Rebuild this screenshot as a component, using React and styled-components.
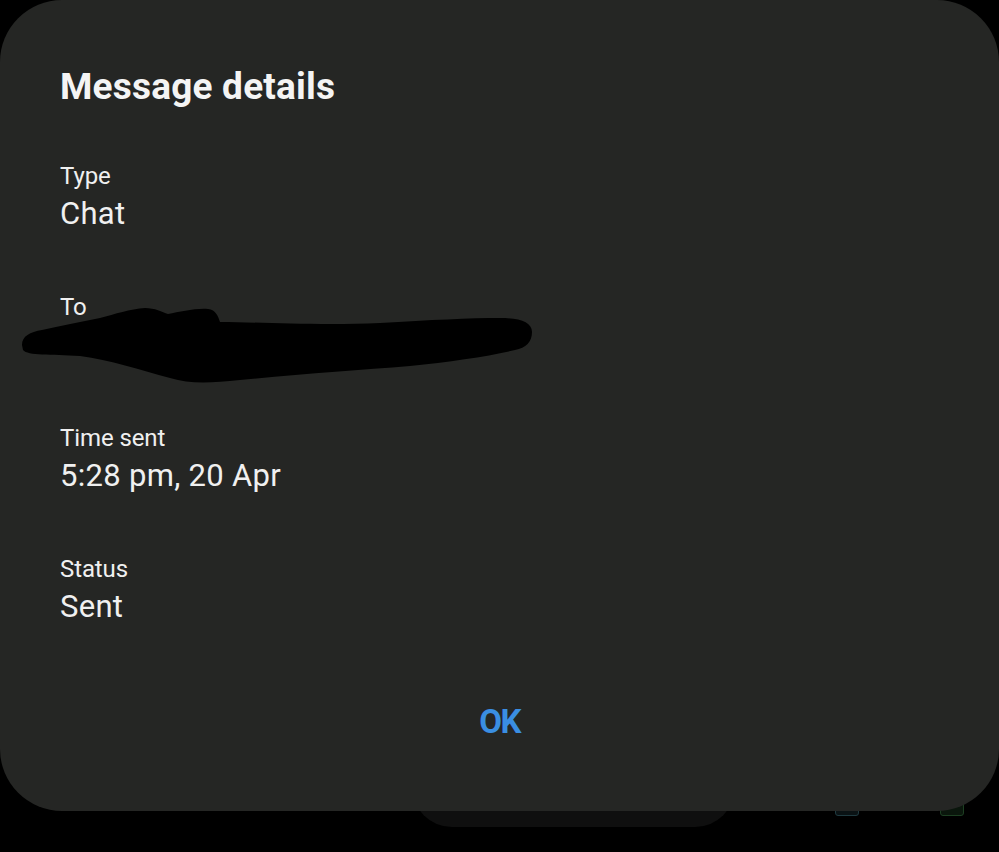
import React from "react";
import styled, { createGlobalStyle } from "styled-components";

const Global = createGlobalStyle`
  html, body { margin: 0; padding: 0; background: #000; }
  body { font-family: Roboto, "Noto Sans", sans-serif; -webkit-font-smoothing: antialiased; }
`;

const Screen = styled.div`
  width: 999px;
  height: 852px;
  background: #000;
  position: relative;
  overflow: hidden;
`;

const Dialog = styled.div`
  position: relative;
  z-index: 1;
  box-sizing: border-box;
  width: 999px;
  height: 811px;
  background: #252624;
  border-radius: 62px;
  padding: 65px 60px 71px;
  display: flex;
  flex-direction: column;
`;

const Title = styled.h1`
  margin: 0 0 53px;
  font-size: 37px;
  line-height: 44px;
  font-weight: 700;
  color: #f4f4f4;
  letter-spacing: 0.2px;
`;

const Fields = styled.div`
  display: flex;
  flex-direction: column;
  gap: 61px;
`;

const Field = styled.div`
  position: relative;
  display: flex;
  flex-direction: column;
  gap: 6px;
`;

const Label = styled.div`
  font-size: 24px;
  line-height: 28px;
  color: #f0f0f0;
  letter-spacing: -0.1px;
`;

const Value = styled.div`
  font-size: 31px;
  line-height: 36px;
  color: #f0f0f0;
  letter-spacing: 0.3px;
  min-height: 36px;
`;

const Redaction = styled.svg`
  position: absolute;
  left: -40px;
  top: 15px;
  width: 514px;
  height: 78px;
`;

const Actions = styled.div`
  margin-top: 79px;
  display: flex;
  justify-content: center;
`;

const OkButton = styled.button`
  background: none;
  border: none;
  padding: 0;
  font-family: inherit;
  font-size: 33px;
  line-height: 36px;
  font-weight: 700;
  color: #3a8ee2;
  letter-spacing: -1.5px;
  cursor: pointer;
`;

const BehindBar = styled.div`
  position: absolute;
  left: 412px;
  top: 780px;
  width: 323px;
  height: 47px;
  border-radius: 0 0 40px 40px;
  background: #0f0f0f;
`;

const BehindIcon = styled.div`
  position: absolute;
  top: 790px;
  left: ${(p) => p.$x}px;
  width: 24px;
  height: 26px;
  border-radius: 3px;
  border: 1px solid ${(p) => p.$c};
  background: ${(p) => p.$bg};
  box-sizing: border-box;
`;

export default function App() {
  return (
    <Screen>
      <Global />
      <BehindBar />
      <BehindIcon $x={835} $c="#1f3a40" $bg="#0a1214" />
      <BehindIcon $x={940} $c="#1d3f22" $bg="#0a160c" />
      <Dialog>
        <Title>Message details</Title>
        <Fields>
          <Field>
            <Label>Type</Label>
            <Value>Chat</Value>
          </Field>
          <Field>
            <Label>To</Label>
            <Value />
            <Redaction viewBox="0 0 514 78" aria-hidden="true">
              <path
                d="M2 37 C2 28 10 24 22 22 C40 18 60 14 80 10 C95 6 110 1 125 0 C135 0 142 4 148 6 C160 4 175 0 188 1 C196 2 198 8 200 14 C240 14 300 18 360 15 C410 12 450 10 480 10 C500 10 512 14 512 24 C512 34 506 40 495 42 C470 48 430 54 390 58 C340 62 280 66 220 72 C190 75 170 76 150 70 C120 62 90 52 60 48 C30 46 8 48 3 42 Z"
                fill="#000"
              />
            </Redaction>
          </Field>
          <Field>
            <Label>Time sent</Label>
            <Value>5:28 pm, 20 Apr</Value>
          </Field>
          <Field>
            <Label>Status</Label>
            <Value>Sent</Value>
          </Field>
        </Fields>
        <Actions>
          <OkButton>OK</OkButton>
        </Actions>
      </Dialog>
    </Screen>
  );
}
